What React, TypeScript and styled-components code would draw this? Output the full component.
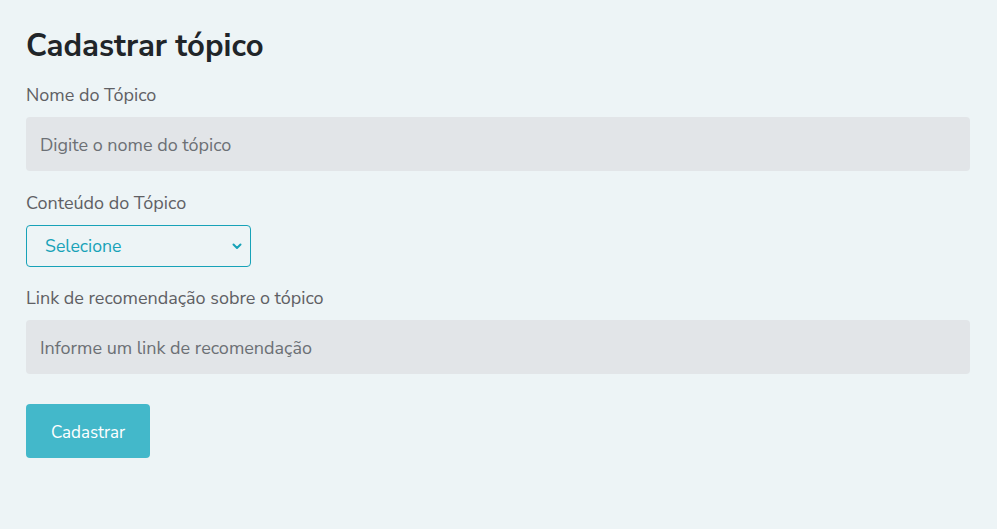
import React from "react";
import styled, { createGlobalStyle } from "styled-components";

const Global = createGlobalStyle`
  html, body { margin: 0; padding: 0; background: #edf4f6; }
  body { font-family: "Nunito Sans", Lato, "Open Sans", sans-serif; }
  * { box-sizing: border-box; }
`;

const Page = styled.div`
  padding: 26px 27px 40px 26px;
  min-height: 529px;
  background: #edf4f6;
`;

const Title = styled.h1`
  margin: 0 0 17px 0;
  font-size: 31px;
  line-height: 40px;
  font-weight: 700;
  color: #212529;
`;

const Form = styled.form`
  display: flex;
  flex-direction: column;
`;

const Field = styled.div<{ $gap?: number }>`
  display: flex;
  flex-direction: column;
  align-items: flex-start;
  margin-bottom: ${(p) => p.$gap ?? 20}px;
`;

const Label = styled.label`
  font-size: 18px;
  line-height: 24px;
  color: #5f6064;
  margin-bottom: 10px;
`;

const TextInput = styled.input`
  width: 100%;
  height: 54px;
  border: none;
  border-radius: 4px;
  background: #e2e5e8;
  padding: 2px 14px 0 14px;
  font-family: inherit;
  font-size: 18px;
  color: #333;
  outline: none;
  &::placeholder { color: #6c7075; }
`;

const SelectWrap = styled.div`
  position: relative;
  width: 225px;
  height: 42px;
`;

const Select = styled.select`
  appearance: none;
  width: 100%;
  height: 100%;
  border: 1px solid #17a2b8;
  border-radius: 4px;
  background: #edf4f6;
  color: #17a2b8;
  padding: 0 30px 0 18px;
  font-family: inherit;
  font-size: 17.7px;
  outline: none;
`;

const Chevron = styled.svg`
  position: absolute;
  right: 8px;
  top: 15px;
  pointer-events: none;
`;

const Button = styled.button`
  align-self: flex-start;
  margin-top: 10px;
  width: 124px;
  height: 54px;
  border: none;
  border-radius: 4px;
  background: #43b8ca;
  color: #fff;
  padding: 2px 0 0 0;
  font-family: inherit;
  font-size: 17px;
  cursor: pointer;
`;

export default function App() {
  return (
    <>
      <Global />
      <Page>
        <Title>Cadastrar tópico</Title>
        <Form onSubmit={(e) => e.preventDefault()}>
          <Field $gap={20}>
            <Label>Nome do Tópico</Label>
            <TextInput placeholder="Digite o nome do tópico" />
          </Field>
          <Field $gap={19}>
            <Label>Conteúdo do Tópico</Label>
            <SelectWrap>
              <Select defaultValue="">
                <option value="">Selecione</option>
              </Select>
              <Chevron width="12" height="12" viewBox="0 0 12 12">
                <path d="M2.5 4.5 L6 8 L9.5 4.5" fill="none" stroke="#17a2b8" strokeWidth="2" strokeLinecap="round" strokeLinejoin="round" />
              </Chevron>
            </SelectWrap>
          </Field>
          <Field $gap={20}>
            <Label>Link de recomendação sobre o tópico</Label>
            <TextInput placeholder="Informe um link de recomendação" />
          </Field>
          <Button type="submit">Cadastrar</Button>
        </Form>
      </Page>
    </>
  );
}
